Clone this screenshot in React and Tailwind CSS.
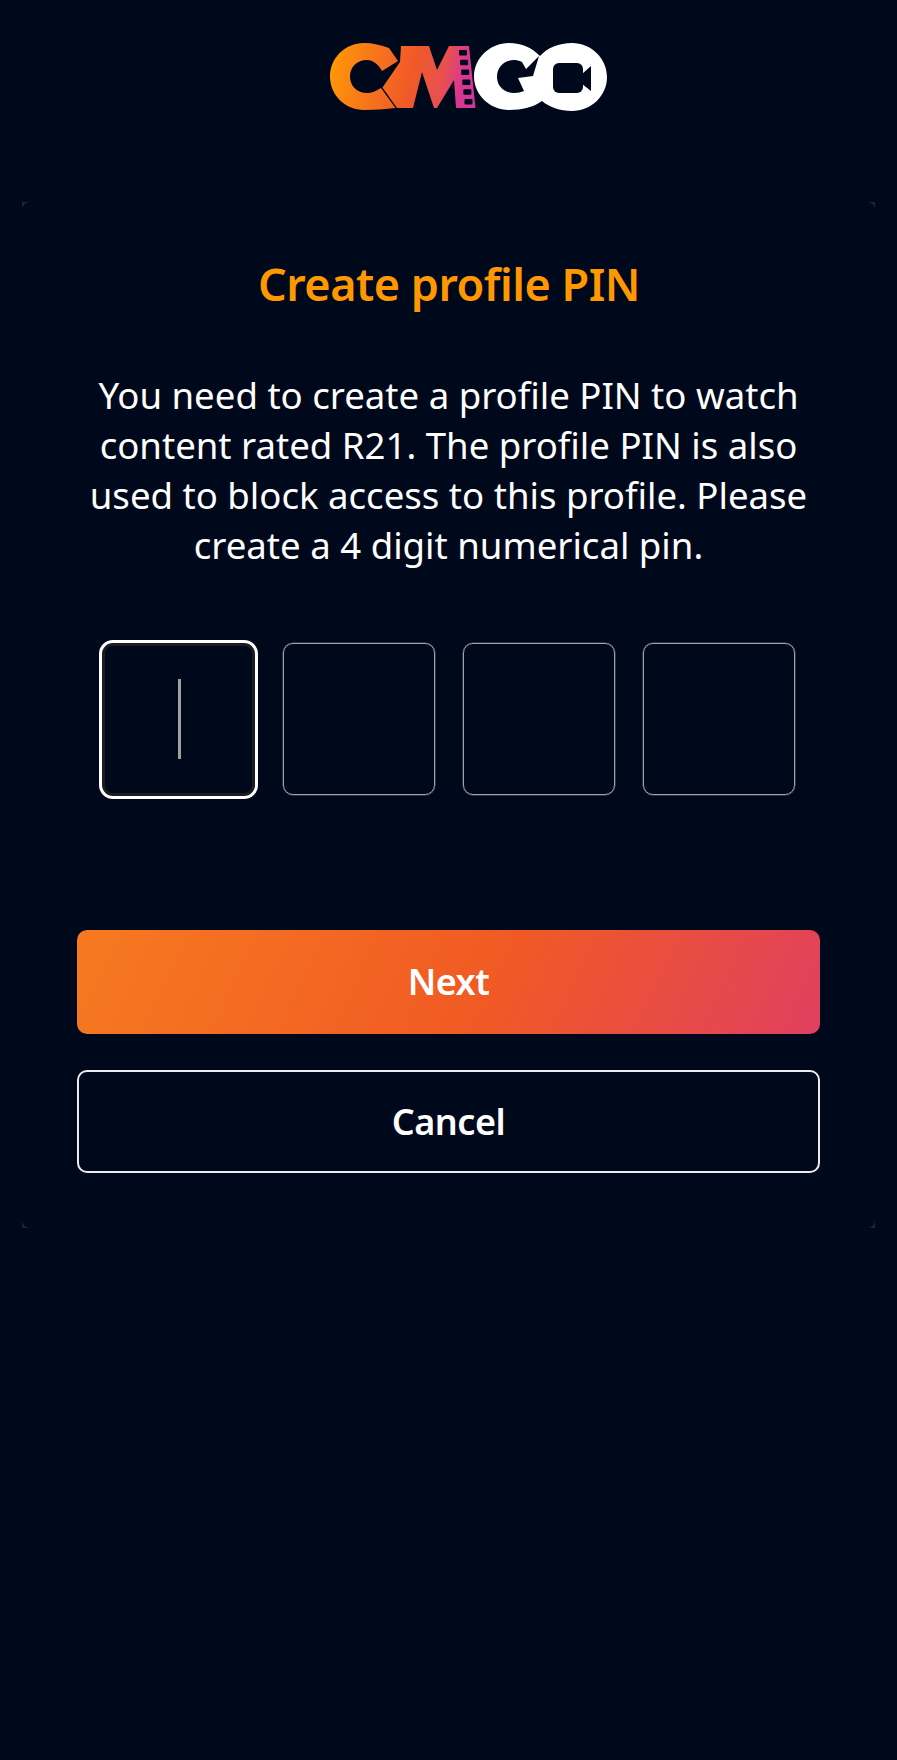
const font = { fontFamily: '"Noto Sans", sans-serif' };

function Logo() {
  return (
    <svg width="310" height="100" viewBox="310 30 310 100" className="block">
      <defs>
        <linearGradient id="cm" gradientUnits="userSpaceOnUse" x1="330" y1="60" x2="475" y2="90">
          <stop offset="0" stopColor="#ff9a03" />
          <stop offset="0.22" stopColor="#f97d18" />
          <stop offset="0.55" stopColor="#f15a26" />
          <stop offset="0.78" stopColor="#e84f52" />
          <stop offset="0.9" stopColor="#d9388f" />
          <stop offset="1" stopColor="#d4359a" />
        </linearGradient>
      </defs>
      {/* C */}
      <path
        fill="url(#cm)"
        d="M398 61 L389 48 C381 45 373 43 364 43 C345 43 330 58 330 76.5 C330 95 345 110 364 110 C375 110 385 109 395.5 108 L381 88 C376 91 372 93 367 93 C357 93 350 86 350 76.5 C350 67 357 60 367 60 C373 60 378 64 382 71 Z"
      />
      {/* M + film strip */}
      <path
        fill="url(#cm)"
        d="M401 46 L429 46 L437 70 L449 46 L469 46 L475.5 108 L456 108 L454 80 L437 108 L434 108 L422 72 L413 108 L397 108 L382.5 87.5 L400 62 Z"
      />
      {[50, 59.8, 69.6, 79.4, 89.2, 99].map((y, i) => (
        <rect key={y} x={459 + i * 1.1} y={y} width="8" height="5.5" rx="1" fill="#00081c" />
      ))}
      {/* G O */}
      <path
        fill="#fff"
        d="M509 43 C522 43 532 48 540 56 C547 48 559 43 572 43 C591 43 607 58 607 77 C607 96 591 111 572 111 C560 111 549 107 542 101 C534 107 522 110 509 110 C490 110 474 95 474 76.5 C474 58 490 43 509 43 Z"
      />
      <path
        fill="#00081c"
        d="M522 62 C519 60.5 516 60 514 60 C504 60 497 67 497 77 C497 86 504 93 514 93 C518 93 521 92 524 91 L518 78 L533 76 L539 56 L526 69 Z"
      />
      {/* camera */}
      <rect x="553" y="63" width="30" height="30" rx="6" fill="#00081c" />
      <path fill="#00081c" d="M582 74 L591 66 L591 91 L582 84 Z" />
    </svg>
  );
}

function Corner({ className }) {
  return <span className={`absolute w-[10px] h-[10px] bg-[#1a2735] ${className}`} />;
}

function PinBox() {
  return <div className="w-[152px] h-[152px] rounded-[10px] border border-[#a0a3aa] shadow-[0_0_0_0.5px_#5a5d68]" />;
}

export default function App() {
  return (
    <div style={font} className="min-h-[1760px] bg-[#00081c] text-white">
      <div className="flex justify-center pt-[30px] pl-[33px]">
        <Logo />
      </div>

      <div className="relative mx-[22px] mt-[72px]">
        <Corner className="top-0 left-0" />
        <Corner className="top-0 right-0" />
        <Corner className="bottom-0 left-0" />
        <Corner className="bottom-0 right-0" />

        <div className="relative rounded-[8px] bg-[#00081c] px-[55px] pt-[49px] pb-[55px] h-[1026px]">
          <h1 className="text-center text-[45px] leading-[66px] font-semibold tracking-[-0.5px] text-[#ff9800] pl-[1px]">
            Create profile PIN
          </h1>

          <p className="mt-[53px] -mx-[10px] text-center text-[36.6px] leading-[50px]">
            You need to create a profile PIN to watch content rated R21. The profile PIN is also used to block access to this profile. Please create a 4 digit numerical pin.
          </p>

          <div className="mt-[73px] flex justify-center items-center gap-[28px]">
            <div className="flex w-[159px] h-[159px] -ml-[4px] -mr-[3px] -my-[4px] items-center justify-center rounded-[14px] border-[3px] border-white shadow-[inset_0_0_0_3px_#1c1c1c]">
              <span className="ml-[2px] w-[3px] h-[80px] bg-[#a0a0a0]" />
            </div>
            <PinBox />
            <PinBox />
            <PinBox />
          </div>

          <button className="mt-[135px] block w-full h-[104px] rounded-[10px] bg-[linear-gradient(115deg,#f67a20_0%,#f15a24_55%,#e0405f_100%)] text-[36px] font-semibold tracking-[-0.5px] text-white">
            Next
          </button>
          <button className="mt-[36px] block w-full h-[103px] rounded-[10px] border-2 border-[#ececec] text-[36px] font-semibold tracking-[-0.5px] text-white">
            Cancel
          </button>
        </div>
      </div>
    </div>
  );
}
